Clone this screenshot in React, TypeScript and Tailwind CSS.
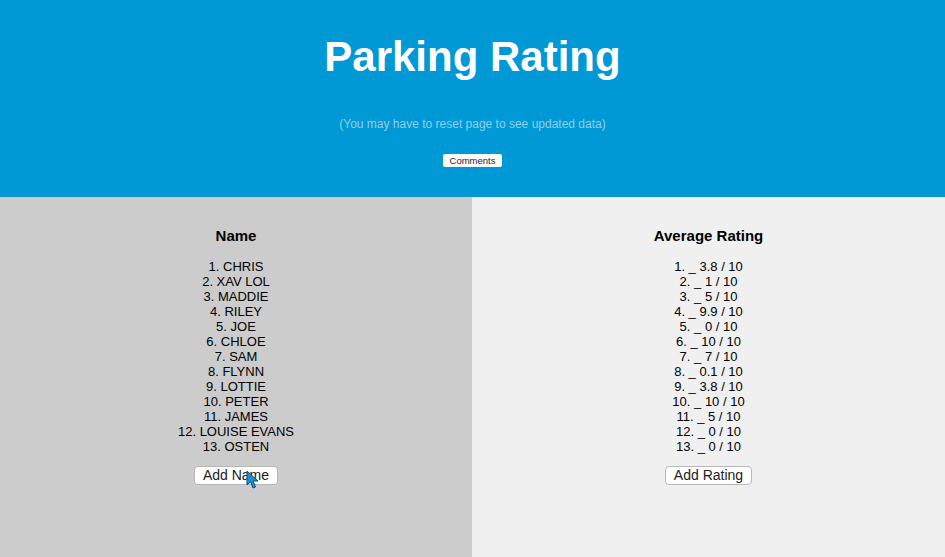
const names = [
  "CHRIS",
  "XAV LOL",
  "MADDIE",
  "RILEY",
  "JOE",
  "CHLOE",
  "SAM",
  "FLYNN",
  "LOTTIE",
  "PETER",
  "JAMES",
  "LOUISE EVANS",
  "OSTEN",
];

const ratings = ["3.8", "1", "5", "9.9", "0", "10", "7", "0.1", "3.8", "10", "5", "0", "0"];

const Cursor = () => (
  <svg
    width="16"
    height="20"
    viewBox="0 0 16 20"
    className="absolute left-[246px] top-[470px]"
  >
    <path
      d="M1 1 L1 15 L4.5 11.8 L7 18 L9.5 17 L7 11 L12 11 Z"
      fill="#1a8fd1"
      stroke="#0b4f7a"
      strokeWidth="1"
      strokeLinejoin="round"
    />
  </svg>
);

export default function App() {
  return (
    <div className="relative flex h-[557px] w-full flex-col font-['Liberation_Sans',Arial,sans-serif]">
      <header className="flex h-[197px] flex-col items-center bg-[#0099d5]">
        <h1 className="mt-[30px] text-[42px] font-bold leading-[54px] text-white">
          Parking Rating
        </h1>
        <p className="mt-[33px] text-[12px] leading-[14px] text-[#8fcfe9]">
          (You may have to reset page to see updated data)
        </p>
        <button className="mt-[23px] h-[13px] rounded-[2px] bg-white px-[7px] text-[9.5px] leading-[14px] text-[#222]">
          Comments
        </button>
      </header>
      <main className="grid flex-1 grid-cols-[472px_1fr]">
        <section className="flex flex-col items-center bg-[#cccccc]">
          <div className="mt-[30px] flex flex-col items-center">
            <h2 className="text-[15px] font-bold leading-[18px] text-black">Name</h2>
            <ol className="mt-[14px] flex flex-col items-center text-[13px] leading-[15px] text-black">
              {names.map((n, i) => (
                <li key={n}>
                  {i + 1}. {n}
                </li>
              ))}
            </ol>
            <button className="mt-[12px] h-[19px] rounded-[4px] border border-[#b8b8b8] bg-white px-[8px] text-[14px] leading-[17px] text-[#222]">
              Add Name
            </button>
          </div>
        </section>
        <section className="flex flex-col items-center bg-[#f0f0f0]">
          <div className="mt-[30px] flex flex-col items-center">
            <h2 className="text-[15px] font-bold leading-[18px] text-black">Average Rating</h2>
            <ol className="mt-[14px] flex flex-col items-center text-[13px] leading-[15px] text-black">
              {ratings.map((r, i) => (
                <li key={i}>
                  {i + 1}. _ {r} / 10
                </li>
              ))}
            </ol>
            <button className="mt-[12px] h-[19px] rounded-[4px] border border-[#b8b8b8] bg-white px-[8px] text-[14px] leading-[17px] text-[#222]">
              Add Rating
            </button>
          </div>
        </section>
      </main>
      <Cursor />
    </div>
  );
}
